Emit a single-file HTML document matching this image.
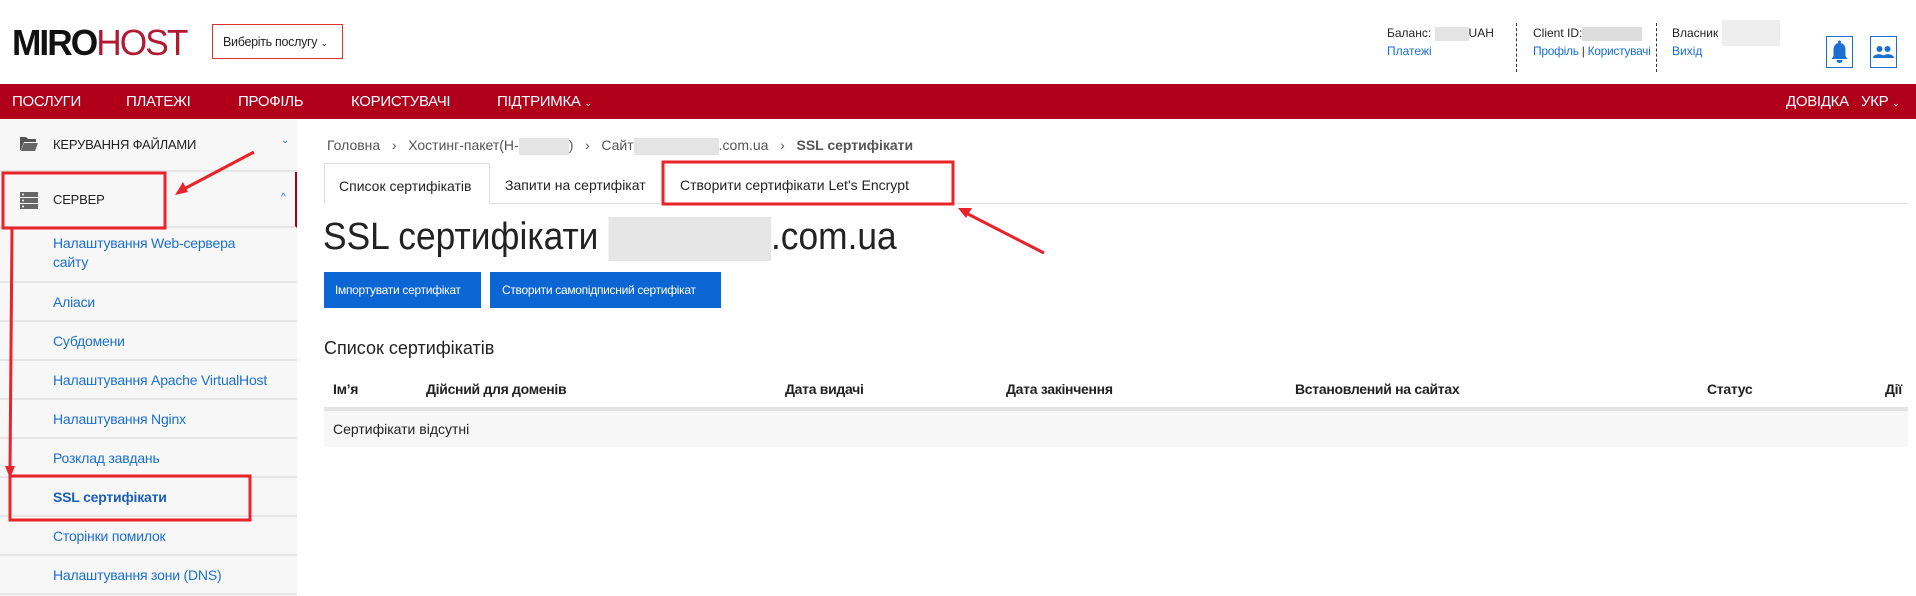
<!DOCTYPE html>
<html><head><meta charset="utf-8"><style>
*{margin:0;padding:0;box-sizing:border-box}
body{width:1916px;height:596px;overflow:hidden;background:#fff;font-family:"Liberation Sans",sans-serif;color:#333;position:relative;font-size:14px}
.a{position:absolute;white-space:nowrap}
.nav{position:absolute;left:0;top:84px;width:1916px;height:35px;background:#b0001a}
.nav span{position:absolute;top:9px;color:#fff;font-size:15px;letter-spacing:-0.3px}
.side{position:absolute;left:0;top:119px;width:297px;height:477px;background:#f7f7f7}
.si{position:absolute;left:0;width:297px;border-bottom:2px solid #e5e5e5}
.si span{position:absolute;left:53px;color:#1a6fd0;font-size:14px;letter-spacing:-0.2px}
.blur{display:inline-block;background:#e4e4e4;vertical-align:middle}
a{color:#1a6fd0;text-decoration:none}
.th{position:absolute;top:381px;font-weight:bold;font-size:14px;color:#222;letter-spacing:-0.3px}
</style></head><body>
<div class="a" style="left:12px;top:22px;font-size:36px;letter-spacing:-2px;transform:scaleX(0.98);transform-origin:left"><span style="color:#111;font-weight:bold">MIRO</span><span style="color:#b01a33">HOST</span></div>
<div class="a" style="left:212px;top:24px;width:131px;height:35px;border:1px solid #d33;font-size:12.5px;padding:10px 0 0 10px;color:#222;letter-spacing:-0.3px">Виберіть послугу <span style="font-size:9px">⌄</span></div>

<div class="a" style="left:1387px;top:26px;font-size:12px;color:#222">Баланс: <span class="blur" style="width:34px;height:14px"></span>UAH</div>
<div class="a" style="left:1387px;top:44px;font-size:12px"><a>Платежі</a></div>
<div class="a" style="left:1516px;top:23px;height:49px;border-left:1px dashed #333"></div>
<div class="a" style="left:1533px;top:26px;font-size:12px;color:#222">Client ID:<span class="blur" style="width:60px;height:14px;background:#ddd"></span></div>
<div class="a" style="left:1533px;top:44px;font-size:12px;letter-spacing:-0.3px"><a>Профіль</a> | <a>Користувачі</a></div>
<div class="a" style="left:1656px;top:23px;height:49px;border-left:1px dashed #333"></div>
<div class="a" style="left:1672px;top:26px;font-size:12px;color:#222">Власник <span class="blur" style="width:58px;height:26px;vertical-align:top;margin-top:-6px;background:#eee"></span></div>
<div class="a" style="left:1672px;top:44px;font-size:12px"><a>Вихід</a></div>
<div class="a" style="left:1826px;top:36px;width:27px;height:32px;border:1px solid #1a6fd0"><svg width="25" height="30" viewBox="0 0 25 30"><path d="M12.5 6c-4 0-6 3-6 7v6l-2 3h16l-2-3v-6c0-4-2-7-6-7z" fill="#1a6fd0"/><circle cx="12.5" cy="5" r="1.5" fill="#1a6fd0"/><path d="M9.5 23a3 3 0 0 0 6 0z" fill="#1a6fd0"/></svg></div>
<div class="a" style="left:1870px;top:36px;width:27px;height:32px;border:1px solid #1a6fd0"><svg width="25" height="30" viewBox="0 0 25 30"><circle cx="8.5" cy="12" r="3" fill="#1a6fd0"/><circle cx="16.5" cy="12" r="3" fill="#1a6fd0"/><path d="M2 21c0-5 12-5 12 0zM11 21c0-5 12-5 12 0z" fill="#1a6fd0"/></svg></div>

<div class="nav">
<span style="left:12px">ПОСЛУГИ</span><span style="left:126px">ПЛАТЕЖІ</span><span style="left:238px">ПРОФІЛЬ</span><span style="left:351px">КОРИСТУВАЧІ</span><span style="left:497px">ПІДТРИМКА <small style="font-size:9px">⌄</small></span>
<span style="left:1786px">ДОВІДКА</span><span style="left:1861px">УКР <small style="font-size:9px">⌄</small></span>
</div>

<div class="side">
<div class="si" style="top:0;height:53px"><svg class="a" style="left:20px;top:16px" width="18" height="16" viewBox="0 0 18 16"><path d="M0 2h6l2 2h8v3H4L1 15H0z" fill="#555"/><path d="M4 8h14l-3 8H1z" fill="#666"/></svg><span style="top:18px;color:#222;font-size:13px">КЕРУВАННЯ ФАЙЛАМИ</span><span style="left:281px;top:16px;font-size:10px">⌄</span></div>
<div class="si" style="top:53px;height:56px;border-right:2px solid #a00018"><svg class="a" style="left:20px;top:20px" width="18" height="17" viewBox="0 0 18 17"><rect y="0" width="18" height="5" fill="#666"/><rect y="6" width="18" height="5" fill="#666"/><rect y="12" width="18" height="5" fill="#666"/><circle cx="3" cy="2.5" r="1" fill="#fff"/><circle cx="3" cy="8.5" r="1" fill="#fff"/><circle cx="3" cy="14.5" r="1" fill="#fff"/></svg><span style="top:20px;color:#222;font-size:13px">СЕРВЕР</span><span style="left:281px;top:20px;font-size:10px">^</span></div>
<div class="si" style="top:109px;height:55px"><span style="top:6px;line-height:19px">Налаштування Web-сервера<br>сайту</span></div>
<div class="si" style="top:164px;height:39px"><span style="top:11px">Аліаси</span></div>
<div class="si" style="top:203px;height:39px"><span style="top:11px">Субдомени</span></div>
<div class="si" style="top:242px;height:39px"><span style="top:11px">Налаштування Apache VirtualHost</span></div>
<div class="si" style="top:281px;height:39px"><span style="top:11px">Налаштування Nginx</span></div>
<div class="si" style="top:320px;height:39px"><span style="top:11px">Розклад завдань</span></div>
<div class="si" style="top:359px;height:39px"><span style="top:11px;font-weight:bold;color:#1a5fb8">SSL сертифікати</span></div>
<div class="si" style="top:398px;height:39px"><span style="top:11px">Сторінки помилок</span></div>
<div class="si" style="top:437px;height:39px"><span style="top:11px">Налаштування зони (DNS)</span></div>
</div>

<div class="a" style="left:327px;top:137px;font-size:14px;color:#555">Головна &nbsp;&nbsp;›&nbsp;&nbsp; Хостинг-пакет(Н-<span class="blur" style="width:50px;height:17px"></span>) &nbsp;&nbsp;›&nbsp;&nbsp; Сайт<span class="blur" style="width:85px;height:17px"></span>.com.ua &nbsp;&nbsp;›&nbsp;&nbsp; <b>SSL сертифікати</b></div>
<div class="a" style="left:324px;top:203px;width:1584px;border-top:1px solid #ddd"></div>
<div class="a" style="left:324px;top:163px;width:166px;height:41px;border:1px solid #ddd;border-bottom:1px solid #fff;background:#fff;padding:14px 0 0 14px;color:#222">Список сертифікатів</div>
<div class="a" style="left:505px;top:177px;color:#222">Запити на сертифікат</div>
<div class="a" style="left:680px;top:177px;color:#222">Створити сертифікати Let's Encrypt</div>

<div class="a" style="left:323px;top:216px;font-size:38px;color:#222;transform:scaleX(0.93);transform-origin:left">SSL сертифікати <span class="blur" style="width:175px;height:44px;background:#e6e6e6"></span>.com.ua</div>
<div class="a" style="left:324px;top:272px;width:157px;height:36px;background:#0b66d4;color:#fff;font-size:12px;padding:11px 0 0 11px;letter-spacing:-0.3px">Імпортувати сертифікат</div>
<div class="a" style="left:490px;top:272px;width:231px;height:36px;background:#0b66d4;color:#fff;font-size:12px;padding:11px 0 0 12px;letter-spacing:-0.3px">Створити самопідписний сертифікат</div>
<div class="a" style="left:324px;top:338px;font-size:18px;color:#222">Список сертифікатів</div>
<div class="th" style="left:333px">Ім’я</div><div class="th" style="left:426px">Дійсний для доменів</div><div class="th" style="left:785px">Дата видачі</div><div class="th" style="left:1006px">Дата закінчення</div><div class="th" style="left:1295px">Встановлений на сайтах</div><div class="th" style="left:1707px">Статус</div><div class="th" style="left:1885px">Дії</div>
<div class="a" style="left:324px;top:407px;width:1584px;height:4px;background:#e3e3e3"></div>
<div class="a" style="left:324px;top:411px;width:1584px;height:36px;background:#f7f7f7;padding:10px 0 0 9px;color:#222">Сертифікати відсутні</div>

<svg class="a" style="left:0;top:0" width="1916" height="596">
<g fill="none" stroke="#e8232a" stroke-width="3">
<rect x="3" y="173" width="162" height="55"/>
<rect x="10" y="476" width="240" height="44"/>
<rect x="663" y="162" width="290" height="42"/>
<path d="M254 152L182 190"/>
<path d="M12 228L10 470"/>
<path d="M1044 253L966 213"/>
</g>
<g fill="#e8232a">
<path d="M175 195l8-13 5 10z"/>
<path d="M10 478l-5-12h10z"/>
<path d="M958 208l14 0-6 10z"/>
</g>
</svg>
</body></html>
